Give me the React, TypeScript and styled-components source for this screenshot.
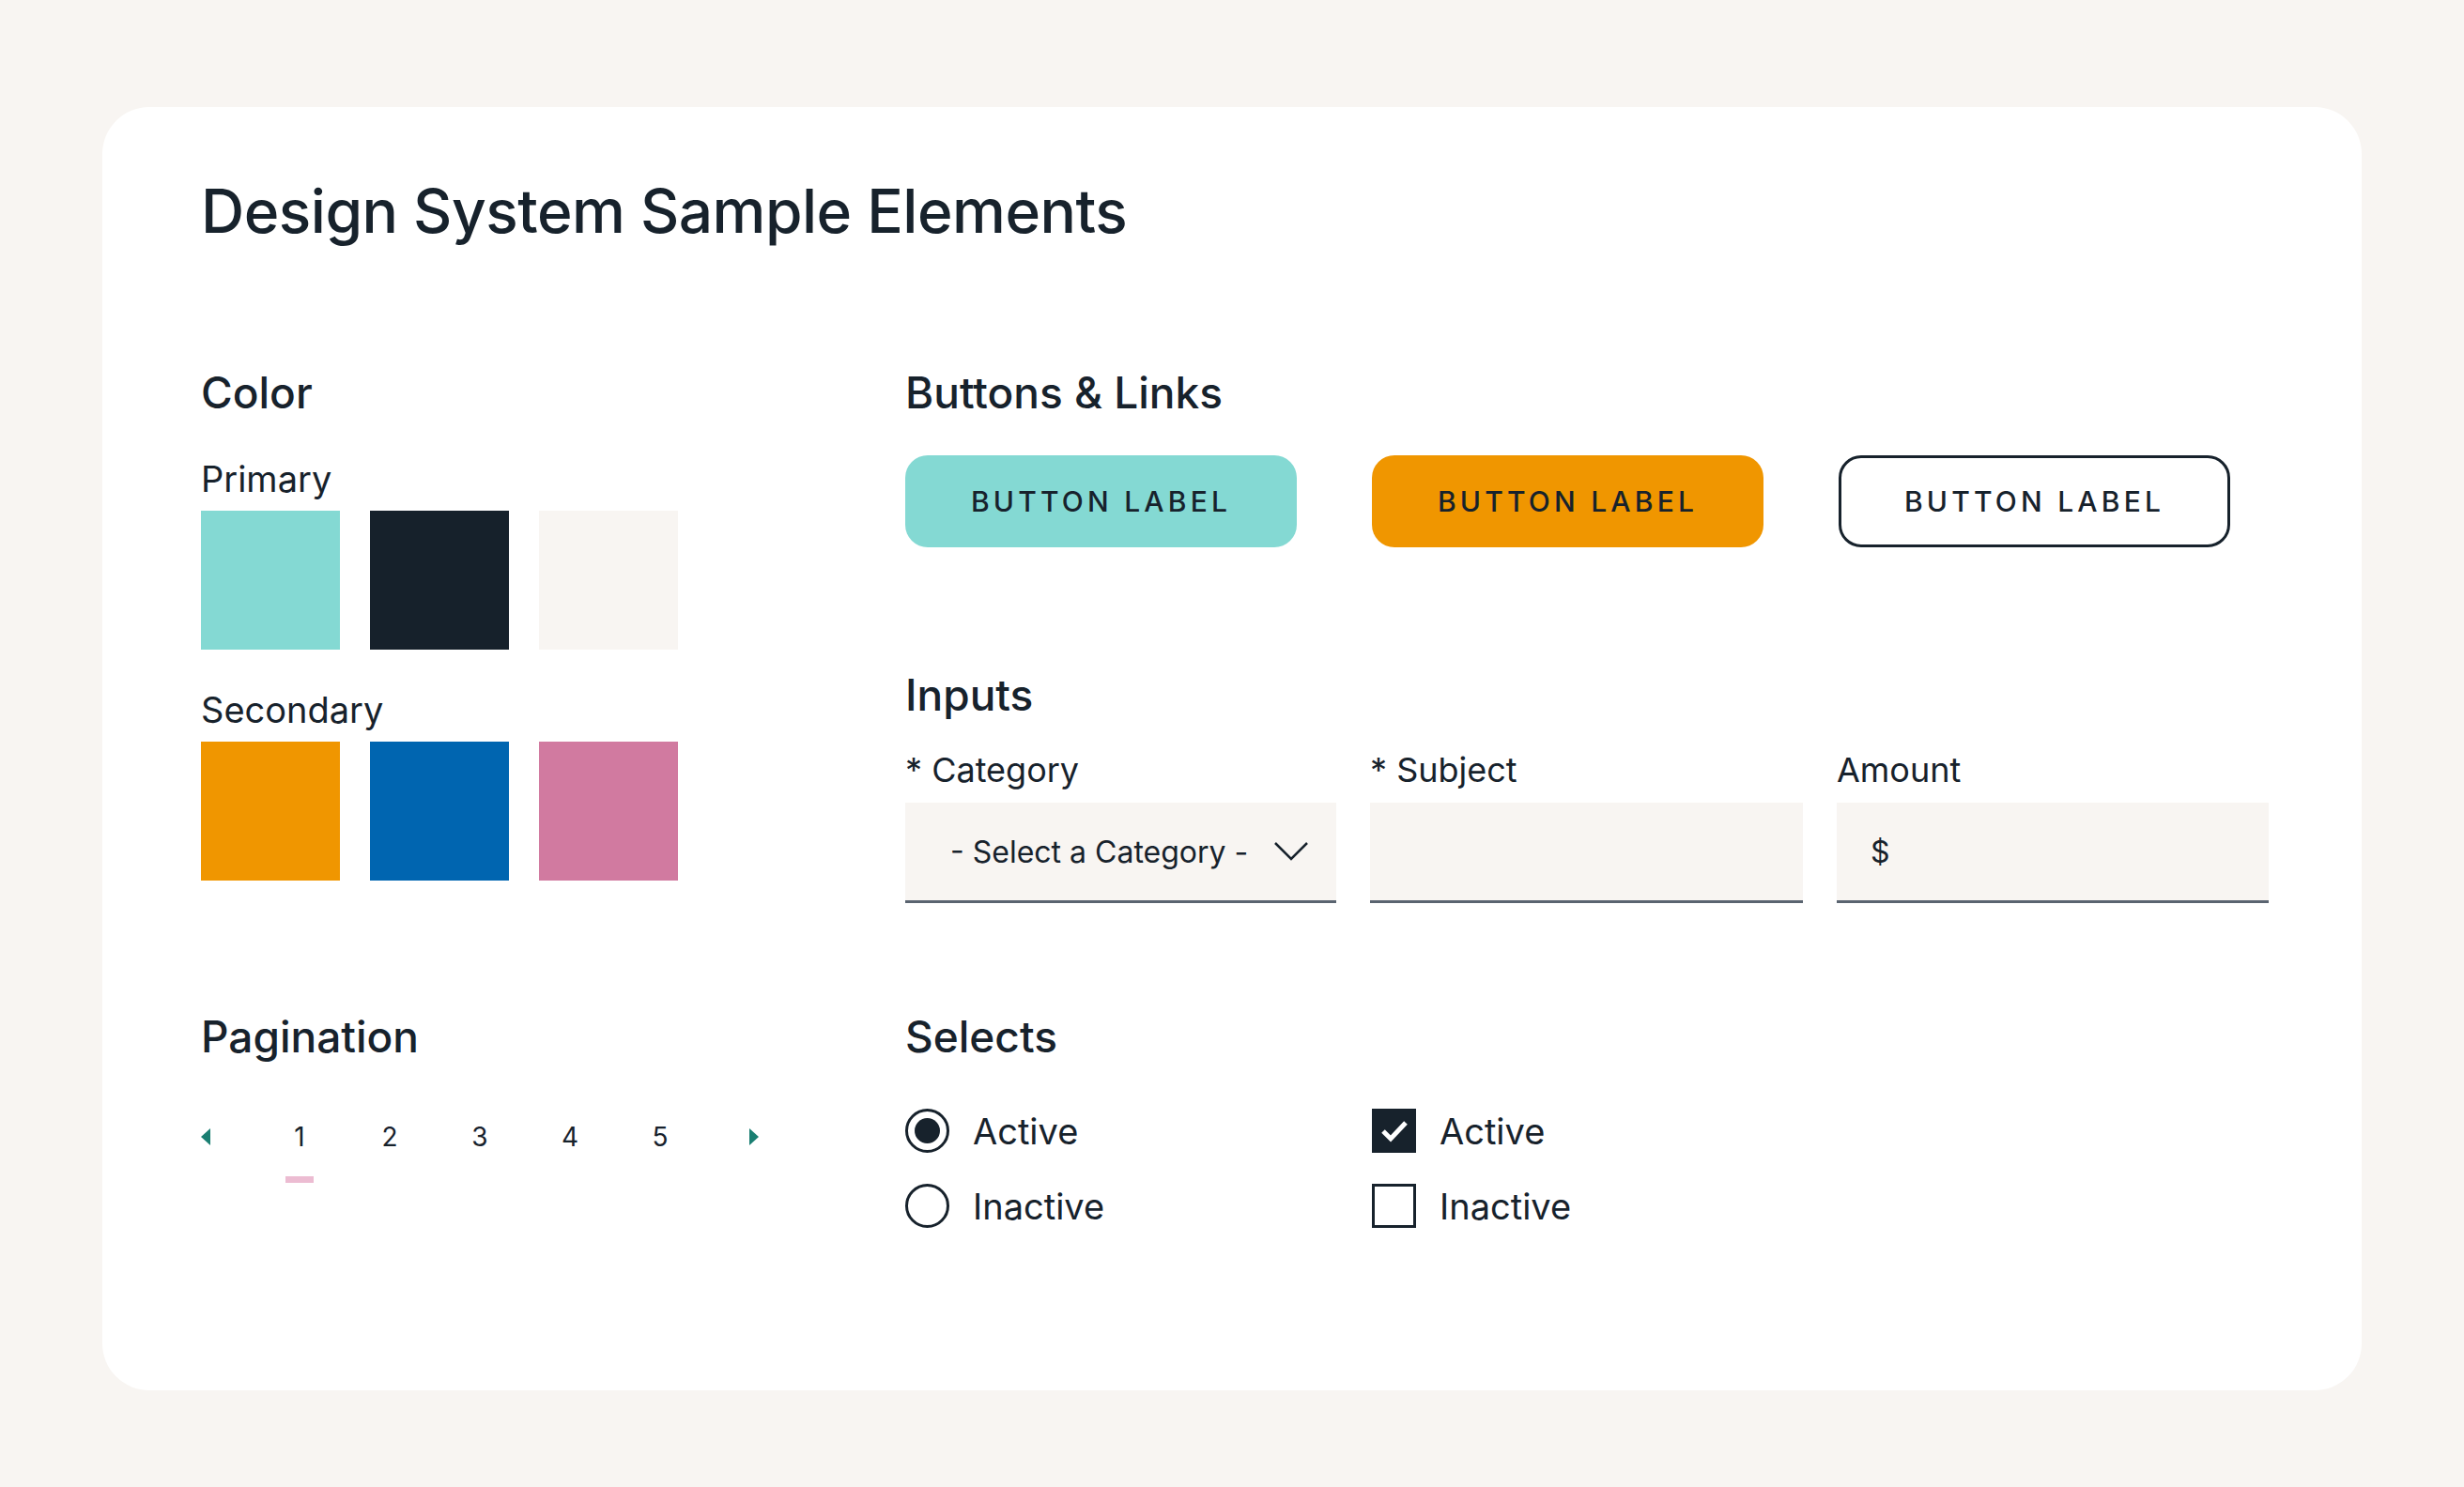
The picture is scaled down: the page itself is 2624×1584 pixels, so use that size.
import React from 'react';
import styled, { createGlobalStyle } from 'styled-components';

const dark = '#17222c';

const GlobalStyle = createGlobalStyle`
  body {
    margin: 0;
    background: #f8f5f2;
    font-family: Inter, "Liberation Sans", sans-serif;
    color: ${dark};
  }
`;

const Page = styled.div`
  padding: 114px 0 0 109px;
`;

const Card = styled.div`
  width: 2406px;
  height: 1367px;
  box-sizing: border-box;
  background: #fff;
  border-radius: 50px;
  padding: 79px 105px 0;
`;

const Title = styled.h1`
  margin: 0;
  font-size: 64px;
  line-height: 64px;
  font-weight: 500;
  letter-spacing: -0.5px;
`;

const Grid = styled.div`
  display: grid;
  grid-template-columns: 750px 1fr;
  row-gap: 119px;
  margin-top: 138px;
  align-items: start;
`;

const Column = styled.div`
  display: flex;
  flex-direction: column;
`;

const Heading = styled.h2<{ $gap: number }>`
  margin: 0 0 ${(p) => p.$gap}px;
  font-size: 46px;
  line-height: 46px;
  font-weight: 500;
`;

const SubLabel = styled.div<{ $top?: number }>`
  font-size: 38px;
  line-height: 38px;
  margin-top: ${(p) => p.$top ?? 0}px;
  margin-bottom: 15px;
`;

const Swatches = styled.div`
  display: flex;
  gap: 32px;
`;

const Swatch = styled.div<{ $c: string }>`
  width: 148px;
  height: 148px;
  background: ${(p) => p.$c};
`;

const Buttons = styled.div`
  display: flex;
  gap: 80px;
  margin-bottom: 134px;
`;

const Button = styled.button<{ $bg: string; $outline?: boolean }>`
  width: 417px;
  height: 98px;
  border-radius: 24px;
  background: ${(p) => p.$bg};
  border: ${(p) => (p.$outline ? `3px solid ${dark}` : 'none')};
  font-family: inherit;
  font-size: 30px;
  font-weight: 500;
  letter-spacing: 0.14em;
  color: ${dark};
`;

const Fields = styled.div`
  display: grid;
  grid-template-columns: 459px 461px 460px;
  column-gap: 36px;
`;

const Field = styled.div`
  display: flex;
  flex-direction: column;
`;

const FieldLabel = styled.div`
  font-size: 36px;
  line-height: 36px;
  margin-bottom: 17px;
`;

const InputBox = styled.div`
  height: 107px;
  box-sizing: border-box;
  background: #f8f5f2;
  border-bottom: 3px solid #5a6470;
  display: flex;
  align-items: center;
  justify-content: space-between;
  padding: 0 28px 0 48px;
  font-size: 32px;
`;

const Pager = styled.div`
  display: flex;
  align-items: center;
  gap: 0;
  margin-top: 8px;
`;

const Arrow = styled.div<{ $dir: 'l' | 'r' }>`
  width: 0;
  height: 0;
  border-top: 9px solid transparent;
  border-bottom: 9px solid transparent;
  ${(p) => (p.$dir === 'l' ? 'border-right: 10px solid #1a7f72;' : 'border-left: 10px solid #1a7f72;')}
`;

const PageNum = styled.div<{ $active?: boolean }>`
  width: 96px;
  text-align: center;
  font-size: 28px;
  line-height: 28px;
  position: relative;
  &::after {
    content: '';
    display: ${(p) => (p.$active ? 'block' : 'none')};
    position: absolute;
    left: 33px;
    top: 56px;
    width: 30px;
    height: 7px;
    background: #ecbcd2;
  }
`;

const SelectGrid = styled.div`
  display: grid;
  grid-template-columns: 497px 1fr;
  row-gap: 33px;
`;

const Option = styled.div`
  display: flex;
  align-items: center;
  gap: 25px;
  font-size: 38px;
`;

const Radio = styled.div<{ $on?: boolean }>`
  width: 47px;
  height: 47px;
  box-sizing: border-box;
  border: 3px solid ${dark};
  border-radius: 50%;
  display: flex;
  align-items: center;
  justify-content: center;
  &::after {
    content: '';
    display: ${(p) => (p.$on ? 'block' : 'none')};
    width: 27px;
    height: 27px;
    border-radius: 50%;
    background: ${dark};
  }
`;

const Check = styled.div<{ $on?: boolean }>`
  width: 47px;
  height: 47px;
  box-sizing: border-box;
  border: 3px solid ${dark};
  background: ${(p) => (p.$on ? dark : '#fff')};
  display: flex;
  align-items: center;
  justify-content: center;
`;

export default function App() {
  return (
    <Page>
      <GlobalStyle />
      <Card>
        <Title>Design System Sample Elements</Title>
        <Grid>
          <Column>
            <Heading $gap={50}>Color</Heading>
            <SubLabel>Primary</SubLabel>
            <Swatches>
              <Swatch $c="#84d9d3" />
              <Swatch $c="#16212b" />
              <Swatch $c="#f8f5f2" />
            </Swatches>
            <SubLabel $top={45}>Secondary</SubLabel>
            <Swatches>
              <Swatch $c="#f09600" />
              <Swatch $c="#0065b0" />
              <Swatch $c="#d17aa0" />
            </Swatches>
          </Column>
          <Column>
            <Heading $gap={44}>Buttons &amp; Links</Heading>
            <Buttons>
              <Button $bg="#84d9d3">BUTTON LABEL</Button>
              <Button $bg="#f09600">BUTTON LABEL</Button>
              <Button $bg="#fff" $outline>BUTTON LABEL</Button>
            </Buttons>
            <Heading $gap={39}>Inputs</Heading>
            <Fields>
              <Field>
                <FieldLabel>* Category</FieldLabel>
                <InputBox>
                  <span>- Select a Category -</span>
                  <svg width="40" height="24" viewBox="0 0 40 24" fill="none" stroke={dark} strokeWidth="2.5">
                    <path d="M3 3 L20 20 L37 3" />
                  </svg>
                </InputBox>
              </Field>
              <Field>
                <FieldLabel>* Subject</FieldLabel>
                <InputBox />
              </Field>
              <Field>
                <FieldLabel>Amount</FieldLabel>
                <InputBox style={{ paddingLeft: 36 }}>
                  <span>$</span>
                </InputBox>
              </Field>
            </Fields>
          </Column>
          <Column>
            <Heading $gap={62}>Pagination</Heading>
            <Pager>
              <Arrow $dir="l" />
              <PageNum $active style={{ marginLeft: 47 }}>1</PageNum>
              <PageNum>2</PageNum>
              <PageNum>3</PageNum>
              <PageNum>4</PageNum>
              <PageNum>5</PageNum>
              <Arrow $dir="r" style={{ marginLeft: 47 }} />
            </Pager>
          </Column>
          <Column>
            <Heading $gap={54}>Selects</Heading>
            <SelectGrid>
              <Option><Radio $on />Active</Option>
              <Option>
                <Check $on>
                  <svg width="30" height="26" viewBox="0 0 30 26" fill="none" stroke="#fff" strokeWidth="5">
                    <path d="M3 13 L11 21 L27 4" />
                  </svg>
                </Check>
                Active
              </Option>
              <Option><Radio />Inactive</Option>
              <Option><Check />Inactive</Option>
            </SelectGrid>
          </Column>
        </Grid>
      </Card>
    </Page>
  );
}
